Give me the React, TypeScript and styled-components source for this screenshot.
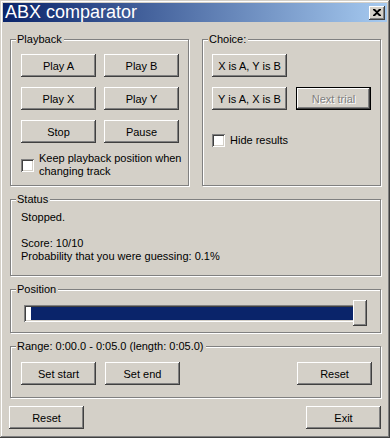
import React from "react";
import styled, { createGlobalStyle, css } from "styled-components";

const Global = createGlobalStyle`
  html, body { margin: 0; padding: 0; background: #D4D0C8; }
  body { font-family: "Liberation Sans", Arial, sans-serif; font-size: 11px; }
`;

const Window = styled.div`
  box-sizing: border-box;
  width: 390px;
  height: 438px;
  padding: 3px;
  background: #D4D0C8;
  box-shadow: inset -1px -1px #404040, inset 1px 1px #D4D0C8,
    inset -2px -2px #808080, inset 2px 2px #ffffff;
  display: flex;
  flex-direction: column;
  color: #000;
`;

const TitleBar = styled.div`
  height: 19px;
  display: flex;
  align-items: center;
  justify-content: space-between;
  padding: 0 2px 0 2px;
  background: linear-gradient(to right, #0A246A, #A6CAF0);
`;

const Title = styled.span`
  color: #fff;
  font-size: 18px;
  line-height: 19px;
  letter-spacing: 0;
`;

const CloseBox = styled.div`
  width: 16px;
  height: 14px;
  background: #D4D0C8;
  box-shadow: inset -1px -1px #404040, inset 1px 1px #ffffff,
    inset -2px -2px #808080;
  display: flex;
  align-items: center;
  justify-content: center;
`;

const Content = styled.div`
  display: flex;
  flex-direction: column;
  gap: 7px;
  padding: 11px 6px 0 7px;
`;

const TopRow = styled.div`
  display: flex;
  gap: 13px;
`;

const Group = styled.fieldset<{ $w?: number }>`
  margin: 0;
  min-width: 0;
  box-sizing: border-box;
  ${(p) => (p.$w ? css`width: ${p.$w}px;` : css`flex: 1;`)}
  border: 1px solid #808080;
  box-shadow: inset 1px 1px #ffffff, 1px 1px #ffffff;
  padding: 0;
`;

const Legend = styled.legend`
  margin-left: 5px;
  padding: 0 2px 0 1px;
  background: #D4D0C8;
  line-height: 13px;
  height: 13px;
`;

const GroupBody = styled.div<{ $pt: number; $pb: number; $pl?: number }>`
  padding: ${(p) => p.$pt}px 4px ${(p) => p.$pb}px ${(p) => p.$pl ?? 10}px;
`;

const ButtonGrid = styled.div<{ $gap: number; $rowGap: number }>`
  display: grid;
  grid-template-columns: 75px 75px;
  column-gap: ${(p) => p.$gap}px;
  row-gap: ${(p) => p.$rowGap}px;
`;

const Button = styled.button<{ $default?: boolean }>`
  box-sizing: border-box;
  width: 75px;
  height: 23px;
  padding: 0;
  margin: 0;
  border: none;
  background: #D4D0C8;
  font-family: "Liberation Sans", Arial, sans-serif;
  font-size: 11px;
  color: #000;
  box-shadow: inset -1px -1px #404040, inset 1px 1px #ffffff,
    inset -2px -2px #808080, inset 2px 2px #D4D0C8;
  ${(p) =>
    p.$default &&
    css`
      box-shadow: inset 0 0 0 1px #000, inset -2px -2px #404040,
        inset 2px 2px #ffffff, inset -3px -3px #808080;
    `}
  &:disabled {
    color: #808080;
    text-shadow: 1px 1px #ffffff;
  }
`;

const CheckRow = styled.label<{ $mt: number }>`
  display: flex;
  align-items: center;
  gap: 5px;
  margin-top: ${(p) => p.$mt}px;
  line-height: 13px;
  white-space: nowrap;
`;

const CheckBox = styled.span`
  flex: none;
  width: 13px;
  height: 13px;
  background: #fff;
  box-sizing: border-box;
  box-shadow: inset 1px 1px #808080, inset -1px -1px #ffffff,
    inset 2px 2px #404040, inset -2px -2px #D4D0C8;
`;

const StatusText = styled.div`
  line-height: 13px;
  white-space: pre-line;
`;

const SliderWrap = styled.div`
  position: relative;
  height: 26px;
  display: flex;
  align-items: center;
`;

const Track = styled.div`
  box-sizing: border-box;
  width: 331px;
  height: 17px;
  padding: 2px 2px 2px 2px;
  background: #fff;
  box-shadow: inset 1px 1px #808080, inset -1px -1px #ffffff,
    inset 2px 2px #404040, inset -2px -2px #D4D0C8;
  display: flex;
`;

const Fill = styled.div`
  flex: 1;
  margin-left: 5px;
  background: #0A246A;
`;

const Thumb = styled.div`
  position: absolute;
  left: 329px;
  top: 0;
  width: 14px;
  height: 26px;
  background: #D4D0C8;
  box-shadow: inset -1px -1px #404040, inset 1px 1px #ffffff,
    inset -2px -2px #808080;
`;

const RangeRow = styled.div`
  display: flex;
  gap: 9px;
  padding-right: 4px;
`;

const Spacer = styled.div`
  flex: 1;
`;

const Footer = styled.div`
  display: flex;
  justify-content: space-between;
  margin: 1px 0 0 -1px;
`;

export default function App() {
  return (
    <>
      <Global />
      <Window>
        <TitleBar>
          <Title>ABX comparator</Title>
          <CloseBox>
            <svg width="8" height="7" viewBox="0 0 8 7">
              <path d="M0 0h2l2 2 2-2h2v1L5 3.5 8 6v1H6L4 5 2 7H0V6l3-2.5L0 1z" fill="#000" />
            </svg>
          </CloseBox>
        </TitleBar>
        <Content>
          <TopRow>
            <Group $w={179}>
              <Legend>Playback</Legend>
              <GroupBody $pt={8} $pb={7}>
                <ButtonGrid $gap={8} $rowGap={10}>
                  <Button>Play A</Button>
                  <Button>Play B</Button>
                  <Button>Play X</Button>
                  <Button>Play Y</Button>
                  <Button>Stop</Button>
                  <Button>Pause</Button>
                </ButtonGrid>
                <CheckRow $mt={9}>
                  <CheckBox />
                  <span>
                    Keep playback position when
                    <br />
                    changing track
                  </span>
                </CheckRow>
              </GroupBody>
            </Group>
            <Group $w={179}>
              <Legend>Choice:</Legend>
              <GroupBody $pt={8} $pb={5} $pl={9}>
                <ButtonGrid $gap={9} $rowGap={10}>
                  <Button>X is A, Y is B</Button>
                  <span />
                  <Button>Y is A, X is B</Button>
                  <Button $default disabled>
                    Next trial
                  </Button>
                </ButtonGrid>
                <CheckRow $mt={24}>
                  <CheckBox />
                  <span>Hide results</span>
                </CheckRow>
              </GroupBody>
            </Group>
          </TopRow>
          <Group>
            <Legend>Status</Legend>
            <GroupBody $pt={5} $pb={12}>
              <StatusText>
                {"Stopped.\n\nScore: 10/10\nProbability that you were guessing: 0.1%"}
              </StatusText>
            </GroupBody>
          </Group>
          <Group>
            <Legend>Position</Legend>
            <GroupBody $pt={4} $pb={6} $pl={13}>
              <SliderWrap>
                <Track>
                  <Fill />
                </Track>
                <Thumb />
              </SliderWrap>
            </GroupBody>
          </Group>
          <Group>
            <Legend>Range: 0:00.0 - 0:05.0 (length: 0:05.0)</Legend>
            <GroupBody $pt={9} $pb={12}>
              <RangeRow>
                <Button>Set start</Button>
                <Button>Set end</Button>
                <Spacer />
                <Button>Reset</Button>
              </RangeRow>
            </GroupBody>
          </Group>
          <Footer>
            <Button>Reset</Button>
            <Button>Exit</Button>
          </Footer>
        </Content>
      </Window>
    </>
  );
}
